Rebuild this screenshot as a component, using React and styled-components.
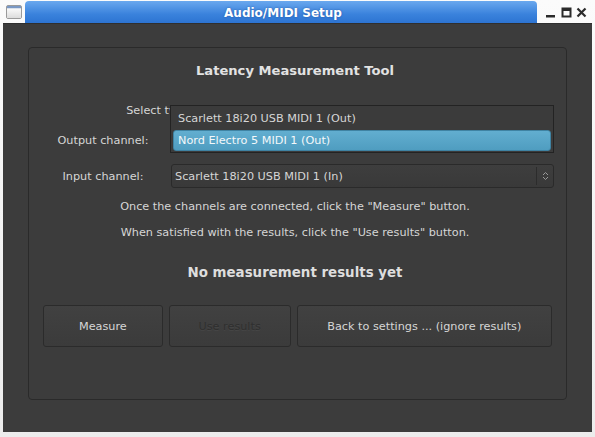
import React from "react";
import styled, { createGlobalStyle } from "styled-components";

const GlobalStyle = createGlobalStyle`
  html, body {
    margin: 0;
    padding: 0;
    background: #f2f2f2;
  }
  * {
    box-sizing: border-box;
  }
`;

const Window = styled.div`
  width: 595px;
  height: 437px;
  display: flex;
  flex-direction: column;
  background: linear-gradient(#fbfbfb, #ececec);
  font-family: "DejaVu Sans", "Noto Sans", sans-serif;
  overflow: hidden;
`;

const TitleBar = styled.div`
  height: 23px;
  display: flex;
  align-items: stretch;
  flex-shrink: 0;
`;

const IconBox = styled.div`
  width: 25px;
  display: flex;
  align-items: center;
  justify-content: center;
  padding-left: 2px;
`;

const TitleTab = styled.div`
  flex: 1;
  background: linear-gradient(#6aa8ee, #3a82dc 60%, #2d74d2);
  border-radius: 4px 4px 0 0;
  margin-top: 1px;
  display: flex;
  align-items: center;
  justify-content: center;
  color: #ffffff;
  font-weight: bold;
  font-size: 12px;
  padding: 1px 0 0 4px;
  text-shadow: 0 0 2px rgba(0, 40, 110, 0.5);
`;

const Controls = styled.div`
  width: 58px;
  display: flex;
  align-items: center;
  justify-content: space-evenly;
  padding: 2px 4px 0 4px;
`;

const Body = styled.div`
  flex: 1;
  margin: 0 3px 5px 3px;
  background: #3c3c3c;
  border-top: 1px solid #2f2f2f;
  padding: 23px 25px 32px 25px;
  display: flex;
  flex-direction: column;
`;

const GroupBox = styled.div`
  position: relative;
  flex: 1;
  border: 1px solid #2a2a2a;
  border-radius: 4px;
  padding: 14px 14px 0 9px;
  display: flex;
  flex-direction: column;
  color: #d6d6d6;
  font-size: 11.25px;
`;

const Heading = styled.div`
  text-align: center;
  font-weight: bold;
  font-size: 13.1px;
  color: #e2e2e2;
  height: 17px;
  line-height: 17px;
`;

const Line = styled.div`
  text-align: center;
  height: 16px;
  line-height: 16px;
  margin-top: ${(p) => p.$top}px;
`;

const Rows = styled.div`
  display: grid;
  grid-template-columns: 130px 383px;
  grid-auto-rows: 24px;
  column-gap: 3px;
  row-gap: 12px;
  margin-top: 9px;
  align-items: center;
`;

const Label = styled.div`
  text-align: center;
`;

const Combo = styled.div`
  height: 24px;
  border: 1px solid #2a2a2a;
  border-radius: 3px;
  background: linear-gradient(#3e3e3e, #393939);
  display: flex;
  align-items: center;
  padding-left: 3px;
`;

const ComboText = styled.div`
  flex: 1;
  visibility: ${(p) => (p.$covered ? "hidden" : "visible")};
`;

const ComboArrow = styled.div`
  width: 17px;
  height: 18px;
  border-left: 1px solid #2c2c2c;
  display: flex;
  align-items: center;
  justify-content: center;
`;

const Result = styled.div`
  text-align: center;
  font-weight: bold;
  font-size: 13.4px;
  color: #dedede;
  margin-top: 23px;
  height: 18px;
  line-height: 18px;
`;

const ButtonRow = styled.div`
  display: flex;
  gap: 6px;
  margin-top: 23px;
  padding-left: 5px;
`;

const Button = styled.div`
  width: ${(p) => p.$w}px;
  height: 42px;
  border: 1px solid #2b2b2b;
  border-radius: 3px;
  background: linear-gradient(#414141, #3b3b3b);
  display: flex;
  align-items: center;
  justify-content: center;
  color: ${(p) => (p.$disabled ? "#2f2f2f" : "#d6d6d6")};
  text-shadow: ${(p) => (p.$disabled ? "0 1px 0 #464646" : "none")};
`;

const Popup = styled.div`
  position: absolute;
  left: 141px;
  top: 57px;
  width: 384px;
  height: 48px;
  background: #3b3b3b;
  border: 1px solid #232323;
  padding: 2px 2px 0 2px;
  display: flex;
  flex-direction: column;
  gap: 1px;
`;

const PopupItem = styled.div`
  height: 21px;
  display: flex;
  align-items: center;
  padding-left: 4px;
  border-radius: 3px;
  color: ${(p) => (p.$active ? "#f4f8fa" : "#d6d6d6")};
  background: ${(p) => (p.$active ? "linear-gradient(#62aed0, #4f9dc0)" : "transparent")};
  border: 1px solid ${(p) => (p.$active ? "#3f83a3" : "transparent")};
`;

const AppIcon = () => (
  <svg width="16" height="14" viewBox="0 0 16 14">
    <defs>
      <linearGradient id="g" x1="0" y1="0" x2="0" y2="1">
        <stop offset="0" stopColor="#fafafa" />
        <stop offset="1" stopColor="#dcdcdc" />
      </linearGradient>
    </defs>
    <rect x="0.5" y="0.5" width="15" height="13" rx="1.5" fill="#f2f2f2" stroke="#9a9a9a" />
    <rect x="1" y="1" width="14" height="2.5" fill="#7a98c4" />
    <rect x="1" y="3.5" width="14" height="9.5" fill="url(#g)" />
  </svg>
);

const MinIcon = () => (
  <svg width="11" height="11" viewBox="0 0 11 11">
    <rect x="1" y="8" width="9" height="2.5" fill="#2a2a2a" />
  </svg>
);

const MaxIcon = () => (
  <svg width="11" height="11" viewBox="0 0 11 11">
    <rect x="1.5" y="1.5" width="8" height="8" fill="none" stroke="#2a2a2a" strokeWidth="2" />
    <rect x="1" y="1" width="9" height="3" fill="#2a2a2a" />
  </svg>
);

const CloseIcon = () => (
  <svg width="11" height="11" viewBox="0 0 11 11">
    <path d="M1.5 1.5 L9.5 9.5 M9.5 1.5 L1.5 9.5" stroke="#2a2a2a" strokeWidth="2.2" />
  </svg>
);

const UpDown = () => (
  <svg width="7" height="10" viewBox="0 0 7 10">
    <path d="M1 4 L3.5 1.5 L6 4 M1 6 L3.5 8.5 L6 6" fill="none" stroke="#9a9a9a" strokeWidth="1" />
  </svg>
);

export default function App() {
  return (
    <>
      <GlobalStyle />
      <Window>
        <TitleBar>
          <IconBox>
            <AppIcon />
          </IconBox>
          <TitleTab>Audio/MIDI Setup</TitleTab>
          <Controls>
            <MinIcon />
            <MaxIcon />
            <CloseIcon />
          </Controls>
        </TitleBar>
        <Body>
          <GroupBox>
            <Heading>Latency Measurement Tool</Heading>
            <Line $top={24}>Select two channels below and connect them using a cable.</Line>
            <Rows>
              <Label>Output channel:</Label>
              <Combo>
                <ComboText $covered>Nord Electro 5 MIDI 1 (Out)</ComboText>
                <ComboArrow>
                  <UpDown />
                </ComboArrow>
              </Combo>
              <Label>Input channel:</Label>
              <Combo>
                <ComboText>Scarlett 18i20 USB MIDI 1 (In)</ComboText>
                <ComboArrow>
                  <UpDown />
                </ComboArrow>
              </Combo>
            </Rows>
            <Line $top={11}>Once the channels are connected, click the "Measure" button.</Line>
            <Line $top={10}>When satisfied with the results, click the "Use results" button.</Line>
            <Result>No measurement results yet</Result>
            <ButtonRow>
              <Button $w={120}>Measure</Button>
              <Button $w={122} $disabled>Use results</Button>
              <Button $w={256}>Back to settings ... (ignore results)</Button>
            </ButtonRow>
            <Popup>
              <PopupItem>Scarlett 18i20 USB MIDI 1 (Out)</PopupItem>
              <PopupItem $active>Nord Electro 5 MIDI 1 (Out)</PopupItem>
            </Popup>
          </GroupBox>
        </Body>
      </Window>
    </>
  );
}
